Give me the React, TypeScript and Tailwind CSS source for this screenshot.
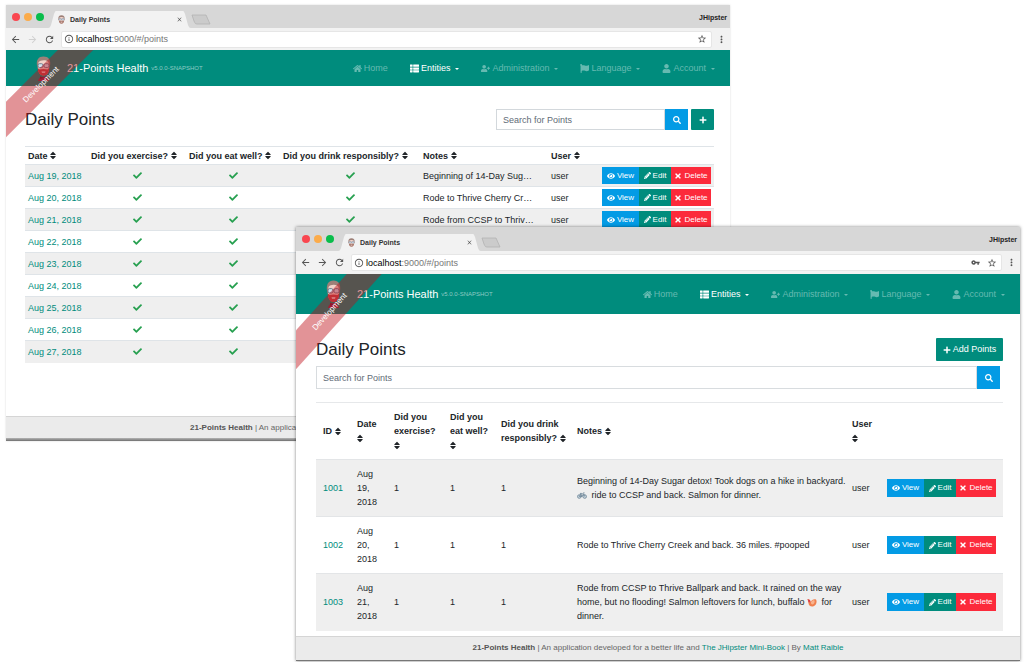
import type { ComponentType, ReactNode } from "react";
import {
  FaCheck,
  FaEye,
  FaFlag,
  FaHome,
  FaPencilAlt,
  FaPlus,
  FaSearch,
  FaSort,
  FaThList,
  FaTimes,
  FaUser,
  FaUserPlus,
} from "react-icons/fa";
import {
  MdArrowBack,
  MdArrowForward,
  MdClose,
  MdInfoOutline,
  MdMoreVert,
  MdRefresh,
  MdStarBorder,
  MdVpnKey,
} from "react-icons/md";

type Icon = ComponentType<{ className?: string }>;

function HipsterHead({ className, bust }: { className: string; bust?: boolean }) {
  return (
    <svg viewBox={bust ? "0 0 30 52" : "0 0 30 42"} className={className} aria-hidden="true" preserveAspectRatio="none">
      {bust && <path d="M4 52c1-6 5-9 11-9s10 3 11 9z" fill="#8c2a48" />}
      <path d="M2 20C0 8 5 1 15 1s15 7 13 19l-2 8H4z" fill="#9d8078" />
      <path d="M5 13c3-5 17-6 20 0l1 14c-1 9-5 13-11 13S5 36 4 27z" fill="#f3d3c9" />
      <path d="M4 25l3 3 8-1 8 1 3-3c1 9-4 16-11 16S3 34 4 25z" fill={bust ? "#c4474c" : "#a8776b"} />
      <path d="M11 32h8l-1 3h-6z" fill="#f6e4e0" />
      <rect x="4" y="16" width="10" height="8" rx="3" fill="#d3e3ee" stroke="#54677c" strokeWidth="1.6" />
      <rect x="16" y="16" width="10" height="8" rx="3" fill="#d3e3ee" stroke="#54677c" strokeWidth="1.6" />
      {bust && <path d="M8 42l7 3 7-3v6l-7-2-7 2z" fill="#6d1a38" />}
    </svg>
  );
}

function Bicycle() {
  return (
    <svg viewBox="0 0 24 16" className="mr-0.5 inline h-[7px] w-2.5" role="img" aria-label="bicycle">
      <g fill="none" stroke="#6f8799" strokeWidth="2">
        <circle cx="5.5" cy="10.5" r="4.3" fill="#c9d6de" />
        <circle cx="18.5" cy="10.5" r="4.3" fill="#c9d6de" />
        <path d="M5.5 10.500L9 4h7l2.500 6.500M9 4l3 6.500L16 4M15 1.500h3M7 3h4M5.500 10.500H12" />
      </g>
    </svg>
  );
}

function Shrimp() {
  return (
    <svg viewBox="0 0 20 18" className="mr-0.5 inline h-[9px] w-2.5" role="img" aria-label="shrimp">
      <path d="M1 2l5 2 1 4c2-4 7-7 11-5 3 5 0 12-6 14C6 18 2 13 3 8z" fill="#f0804e" />
      <path d="M8 8c2-3 5-4 7-3 1 4-1 7-4 8-2 0-4-2-3-5z" fill="#f9b48e" />
      <path d="M1 2l5 2 1 4-4 1z" fill="#d9434a" />
    </svg>
  );
}

function TabStrip({ tall }: { tall?: boolean }) {
  return (
    <div className={`flex items-end bg-[#d7d7d7] pl-1.5 ${tall ? "h-6" : "h-[23px]"}`}>
      <div className="flex h-full w-9 shrink-0 items-center gap-1">
        <span className="size-2 rounded-full bg-[#f9464f]" />
        <span className="size-2 rounded-full bg-[#fbab4a]" />
        <span className="size-2 rounded-full bg-[#09bd4b]" />
      </div>
      <div className="flex h-[17px] w-[143px]">
        <svg viewBox="0 0 8 17" className="h-full w-2" aria-hidden="true" preserveAspectRatio="none">
          <path d="M0 17c2 0 2-1 3-3L6 3c1-2 1-3 2-3v17z" fill="#f2f2f2" />
        </svg>
        <div className="flex flex-1 items-center bg-[#f2f2f2] pl-0.5 text-[7px] font-bold text-[#333]">
          <HipsterHead className="mr-[5px] h-[9px] w-[7px]" />
          <span className="flex-1 pt-0.5">Daily Points</span>
          <button type="button" aria-label="Close tab" className="text-[#555]">
            <MdClose className="size-[7px]" />
          </button>
        </div>
        <svg viewBox="0 0 8 17" className="h-full w-2" aria-hidden="true" preserveAspectRatio="none">
          <path d="M8 17c-2 0-2-1-3-3L2 3C1 1 1 0 0 0v17z" fill="#f2f2f2" />
        </svg>
      </div>
      <svg viewBox="0 0 20 12" className="mb-0.5 h-3 w-5" aria-hidden="true">
        <path d="M1 1h14l4 9H6C4 10 4 9 3 7z" fill="#cbcbcb" stroke="#b3b3b3" strokeWidth="0.8" />
      </svg>
      <span className="ml-auto self-center pt-[3px] pr-[3px] text-[7px] font-bold text-[#222]">JHipster</span>
    </div>
  );
}

function Toolbar({ front }: { front?: boolean }) {
  return (
    <div className={`flex items-center bg-[#f2f2f2] pl-1 text-[#555] ${front ? "h-[23px]" : "h-[22px]"}`}>
      <div className="flex w-[51px] items-center gap-1.5">
        <button type="button" aria-label="Back">
          <MdArrowBack className="size-[11px]" />
        </button>
        <button type="button" aria-label="Forward" className={front ? "" : "text-[#d0d0d0]"}>
          <MdArrowForward className="size-[11px]" />
        </button>
        <button type="button" aria-label="Reload">
          <MdRefresh className="size-[11px]" />
        </button>
      </div>
      <div className="flex h-[17px] flex-1 items-center rounded-xs border border-[#e6e6e6] bg-white pr-1 pl-0.5">
        <MdInfoOutline className="mr-0.5 size-[10px]" />
        <span className="flex-1 text-[9px] leading-3 text-[#777]">
          <span className="text-black">localhost</span>:9000/#/points
        </span>
        {front && <MdVpnKey className="mr-[7px] size-[9px]" />}
        <MdStarBorder className="size-[10px]" />
      </div>
      <button type="button" aria-label="Menu" className="flex w-[18px] justify-center">
        <MdMoreVert className="size-[11px]" />
      </button>
    </div>
  );
}

const navItems: { label: string; icon: Icon; caret: boolean; active?: boolean }[] = [
  { label: "Home", icon: FaHome, caret: false },
  { label: "Entities", icon: FaThList, caret: true, active: true },
  { label: "Administration", icon: FaUserPlus, caret: true },
  { label: "Language", icon: FaFlag, caret: true },
  { label: "Account", icon: FaUser, caret: true },
];

function NavBar({ front }: { front?: boolean }) {
  return (
    <header className={`flex items-center bg-[#008c7d] pr-[15px] pl-[30px] ${front ? "h-10" : "h-9"}`}>
      <HipsterHead bust className={front ? "h-7 w-[15px]" : "h-[25px] w-[15px]"} />
      <a href="#/" className="ml-4 flex items-center gap-[3px] text-[11px] text-white">
        21-Points Health <span className="text-[6px] text-[#8fcbc4]">v5.0.0-SNAPSHOT</span>
      </a>
      <nav className="ml-auto flex items-center gap-[22px] pt-px text-[9px]">
        {navItems.map(({ label, icon: ItemIcon, caret, active }) => (
          <a
            key={label}
            href="#/"
            className={`flex items-center gap-0.5 ${active ? "text-white" : "text-[#66bab1]"}`}
          >
            <ItemIcon className="size-[9px]" />
            {label}
            {caret && (
              <span className="ml-[3px] border-x-2 border-t-2 border-x-transparent border-t-current" />
            )}
          </a>
        ))}
      </nav>
    </header>
  );
}

function Ribbon({ front }: { front?: boolean }) {
  return (
    <div className="pointer-events-none absolute top-0 left-0 h-[100px] w-24 overflow-hidden">
      <div
        className={`absolute flex w-[140px] items-center justify-center bg-[rgba(190,15,25,0.45)] text-[8px] text-white ${
          front ? "top-[25px] left-[-36px] h-[26px] rotate-[-48deg]" : "top-[22px] left-[-35px] h-[25px] -rotate-45"
        }`}
      >
        Development
      </div>
    </div>
  );
}

const footerStyle = "flex items-center border-t border-[#d5d5d5] bg-[#ebebeb] text-[8px] whitespace-pre text-[#666]";

function SortHeader({ children, className }: { children: ReactNode; className: string }) {
  return (
    <th scope="col" className={`text-left font-bold whitespace-pre-line ${className}`}>
      {children}
      <FaSort className="-mt-px inline h-[9px] w-[6px]" preserveAspectRatio="xMidYMid slice" />
    </th>
  );
}

function RowActions({ front }: { front?: boolean }) {
  const height = front ? "h-[18px]" : "h-[17px]";
  return (
    <div className={`ml-auto flex w-[109px] text-[8px] text-white ${height}`}>
      <button type="button" className="flex w-[37px] items-center justify-center gap-0.5 bg-[#039be5]">
        <FaEye className="size-2" /> View
      </button>
      <button type="button" className="flex w-8 items-center justify-center gap-0.5 bg-[#008c7d]">
        <FaPencilAlt className="size-[7px]" /> Edit
      </button>
      <button type="button" className="flex w-10 items-center justify-center gap-0.5 bg-[#fc2a3b]">
        <FaTimes className="size-2" /> Delete
      </button>
    </div>
  );
}

const dates = [19, 20, 21, 22, 23, 24, 25, 26, 27].map((day) => `Aug ${day}, 2018`);
const shortNotes = ["Beginning of 14-Day Sug…", "Rode to Thrive Cherry Cr…", "Rode from CCSP to Thriv…"];

function BackWindow() {
  return (
    <section className="absolute top-[5px] right-[294px] left-1.5 bg-white shadow-[0_0_2px_rgba(0,0,0,0.15)]">
      <TabStrip />
      <Toolbar />
      <div className="relative">
        <NavBar />
        <main className="min-h-[330px] pt-[23px] pr-4 pl-[19px]">
          <div className="flex h-[21px] items-center">
            <h1 className="flex-1 text-[17px] leading-5">Daily Points</h1>
            <input
              type="search"
              aria-label="Search for Points"
              placeholder="Search for Points"
              className="h-full w-[169px] border border-[#d3d8dc] pl-1.5 text-[9px] placeholder:text-[#5f6b76]"
            />
            <button
              type="button"
              aria-label="Search"
              className="flex h-full w-[23px] items-center justify-center bg-[#039be5] text-white"
            >
              <FaSearch className="size-2" />
            </button>
            <button
              type="button"
              aria-label="Add points"
              className="ml-[3px] flex h-full w-[23px] items-center justify-center rounded-[1px] bg-[#008c7d] text-white"
            >
              <FaPlus className="size-2" />
            </button>
          </div>
          <table className="mt-4 w-full table-fixed border-t border-[#dfe4e8] text-[9px] leading-3">
            <thead>
              <tr className="h-[18px]">
                <SortHeader className="w-[63px] pl-[3px]">Date </SortHeader>
                <SortHeader className="w-[98px] pl-[3px]">Did you exercise? </SortHeader>
                <SortHeader className="w-[94px] pl-[3px]">Did you eat well? </SortHeader>
                <SortHeader className="w-[140px] pl-[3px]">Did you drink responsibly? </SortHeader>
                <SortHeader className="pl-[3px]">Notes </SortHeader>
                <SortHeader className="w-[51px] pl-[3px]">User </SortHeader>
                <td className="w-[115px]" />
              </tr>
            </thead>
            <tbody>
              {dates.map((date, index) => (
                <tr key={date} className="h-[22px] border-t border-[#dfe4e8] odd:bg-[#efefef]">
                  <td className="pl-[3px]">
                    <a href="#/points" className="text-[#008c7d]">
                      {date}
                    </a>
                  </td>
                  {["exercise", "eat", "drink"].map((kind) => (
                    <td key={kind}>
                      <FaCheck className="mx-auto size-[9px] text-[#27a050]" role="img" aria-label="yes" />
                    </td>
                  ))}
                  <td className="truncate pl-[3px]">{shortNotes[index]}</td>
                  <td className="pl-[3px]">{shortNotes[index] && "user"}</td>
                  <td className="pr-[3px]">{shortNotes[index] && <RowActions />}</td>
                </tr>
              ))}
            </tbody>
          </table>
        </main>
        <Ribbon />
      </div>
      <footer className={`h-[22px] pl-[184px] ${footerStyle}`}>
        <strong className="text-[#555]">21-Points Health</strong>
        {" | An application"}
      </footer>
      <div className="h-[3px] bg-linear-to-b from-[#b5b5b5] to-[#707070]" />
    </section>
  );
}

const entries: { id: number; date: string; notes: ReactNode }[] = [
  {
    id: 1001,
    date: dates[0],
    notes: (
      <>
        Beginning of 14-Day Sugar detox! Took dogs on a hike in backyard.
        <br />
        <Bicycle /> ride to CCSP and back. Salmon for dinner.
      </>
    ),
  },
  { id: 1002, date: dates[1], notes: "Rode to Thrive Cherry Creek and back. 36 miles. #pooped" },
  {
    id: 1003,
    date: dates[2],
    notes: (
      <>
        Rode from CCSP to Thrive Ballpark and back. It rained on the way
        <br />
        home, but no flooding! Salmon leftovers for lunch, buffalo <Shrimp /> for
        <br />
        dinner.
      </>
    ),
  },
];

function FrontWindow() {
  return (
    <section className="absolute top-[227px] right-1 left-[296px] border-b border-[#777] bg-white shadow-[0_0_3px_rgba(0,0,0,0.5)]">
      <TabStrip tall />
      <Toolbar front />
      <div className="relative">
        <NavBar front />
        <main className="pt-6 pr-[17px] pb-[5px] pl-5">
          <div className="flex h-[23px] items-center justify-between">
            <h1 className="text-[17px] leading-5">Daily Points</h1>
            <button
              type="button"
              className="flex h-full w-[67px] items-center justify-center gap-0.5 rounded-[1px] bg-[#008c7d] text-[9px] text-white"
            >
              <FaPlus className="size-2" /> Add Points
            </button>
          </div>
          <div className="mt-[5px] mr-[3px] flex h-[23px]">
            <input
              type="search"
              aria-label="Search for Points"
              placeholder="Search for Points"
              className="h-full min-w-0 flex-1 border border-[#d8dcdf] pl-1.5 text-[9px] placeholder:text-[#5f6b76]"
            />
            <button
              type="button"
              aria-label="Search"
              className="flex h-full w-[23px] items-center justify-center bg-[#039be5] text-white"
            >
              <FaSearch className="size-2" />
            </button>
          </div>
          <table className="mt-[13px] w-full table-fixed border-t border-[#e6e8ea] text-[9px] leading-[14px]">
            <thead>
              <tr className="h-[57px]">
                <SortHeader className="w-[34px] pl-[7px]">ID </SortHeader>
                <SortHeader className="w-[37px] pl-[7px]">{"Date\n"}</SortHeader>
                <SortHeader className="w-14 pl-[7px]">{"Did you\nexercise?\n"}</SortHeader>
                <SortHeader className="w-[51px] pl-[7px]">{"Did you\neat well?\n"}</SortHeader>
                <SortHeader className="w-[76px] pl-[7px]">{"Did you drink\nresponsibly? "}</SortHeader>
                <SortHeader className="pl-[7px]">Notes </SortHeader>
                <SortHeader className="w-[35px] pl-[7px]">{"User\n"}</SortHeader>
                <td className="w-[123px]" />
              </tr>
            </thead>
            <tbody>
              {entries.map(({ id, date, notes }) => (
                <tr key={id} className="h-[57px] border-t border-[#e3e5e7] odd:bg-[#efefef]">
                  <td className="pl-[7px]">
                    <a href="#/points" className="text-[#008c7d]">
                      {id}
                    </a>
                  </td>
                  <td className="px-[7px]">{date}</td>
                  <td className="pl-[7px]">1</td>
                  <td className="pl-[7px]">1</td>
                  <td className="pl-[7px]">1</td>
                  <td className="pl-[7px] whitespace-nowrap">{notes}</td>
                  <td className="pl-[7px]">user</td>
                  <td className="pr-[7px]">
                    <RowActions front />
                  </td>
                </tr>
              ))}
            </tbody>
          </table>
        </main>
        <Ribbon front />
      </div>
      <footer className={`h-6 justify-center ${footerStyle}`}>
        <strong className="text-[#555]">21-Points Health</strong>
        {" | An application developed for a better life and "}
        <a href="#book" className="text-[#008c7d]">
          The JHipster Mini-Book
        </a>
        {" | By "}
        <a href="#author" className="text-[#008c7d]">
          Matt Raible
        </a>
      </footer>
    </section>
  );
}

export default function App() {
  return (
    <div className="relative min-h-screen overflow-hidden bg-white font-['Liberation_Sans',Arial,sans-serif] text-[#212529]">
      <BackWindow />
      <FrontWindow />
    </div>
  );
}
